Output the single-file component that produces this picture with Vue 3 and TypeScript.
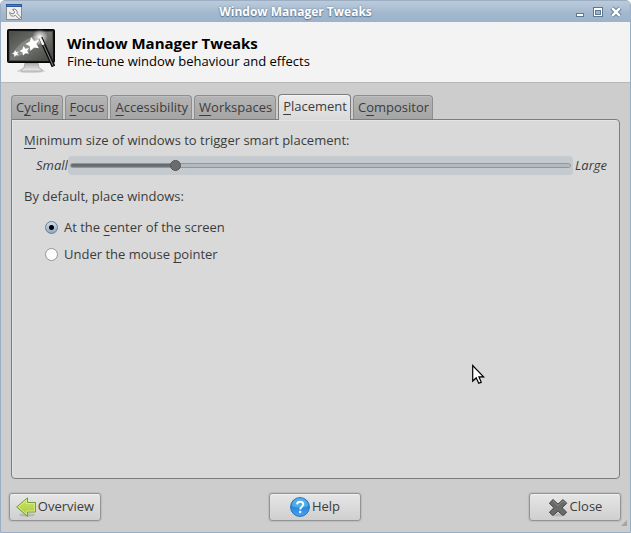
<script setup lang="ts">
import { computed, ref } from 'vue'

interface Label {
  before: string
  key: string
  after: string
}

const tabs: Label[] = [
  { before: 'C', key: 'y', after: 'cling' },
  { before: '', key: 'F', after: 'ocus' },
  { before: '', key: 'A', after: 'ccessibility' },
  { before: '', key: 'W', after: 'orkspaces' },
  { before: '', key: 'P', after: 'lacement' },
  { before: 'C', key: 'o', after: 'mpositor' },
]
const activeTab = ref(4)

const modes: (Label & { value: string })[] = [
  { value: 'center', before: 'At the ', key: 'c', after: 'enter of the screen' },
  { value: 'mouse', before: 'Under the mouse ', key: 'p', after: 'ointer' },
]
const mode = ref('center')

const maxSize = 500
const size = ref(102)
const sliderStyle = computed(() => ({ '--fill': `${(size.value / maxSize) * 100}%` }))
</script>

<template>
  <div class="window">
    <header class="titlebar">
      <svg class="app-icon" viewBox="0 0 16 16" aria-hidden="true">
        <rect x=".5" y=".5" width="15" height="15" fill="#eee" stroke="#8b8d8b" />
        <rect width="16" height="3" fill="#2d5a9e" />
        <rect x="1" y="1" width="14" height="1" fill="#4b7cc0" />
        <path d="M6.500 5.500a3.200 3.200 0 0 1 4.500 4l3.800 3.700-1.600 1.700-3.900-3.700a3.300 3.300 0 0 1-5.600-2.800l2.300 1.600 2-.5.600-2z" fill="#fafafa" stroke="#808080" />
      </svg>
      <span class="title">Window Manager Tweaks</span>
      <div class="controls">
        <button type="button" aria-label="Minimize">
          <svg viewBox="0 0 12 12"><rect x="2.500" y="7.500" width="7" height="3" fill="#fff" stroke="#5f7891" /></svg>
        </button>
        <button type="button" aria-label="Maximize">
          <svg viewBox="0 0 12 12">
            <rect x="1.500" y="1.500" width="9" height="9" fill="#fff" stroke="#5f7891" />
            <rect x="3.500" y="4.500" width="5" height="4" fill="#9db5ce" stroke="#5f7891" />
          </svg>
        </button>
        <button type="button" aria-label="Close window">
          <svg viewBox="0 0 12 12">
            <path d="M2 2l8 8M10 2l-8 8" stroke="#667e96" stroke-width="4.400" />
            <path d="M2.200 2.200l7.600 7.600M9.800 2.200l-7.600 7.600" stroke="#fff" stroke-width="2.400" />
          </svg>
        </button>
      </div>
    </header>

    <section class="banner">
      <svg class="banner-icon" viewBox="0 0 48 48" aria-hidden="true">
        <defs>
          <linearGradient id="screen" x1="0" y1="0" x2="1" y2="1">
            <stop offset="0" stop-color="#484a46" />
            <stop offset=".5" stop-color="#737571" />
            <stop offset="1" stop-color="#41433f" />
          </linearGradient>
          <radialGradient id="glow">
            <stop offset="0" stop-color="#fff" stop-opacity=".95" />
            <stop offset="1" stop-color="#fff" stop-opacity="0" />
          </radialGradient>
          <linearGradient id="stand" x1="0" y1="0" x2="0" y2="1">
            <stop offset="0" stop-color="#aaa" />
            <stop offset="1" stop-color="#eee" />
          </linearGradient>
        </defs>
        <ellipse cx="24" cy="43" rx="14" ry="2" fill="#999" opacity=".35" />
        <path d="M18 35h13l1 5 3 1.500v1.500H14v-1.500l3-1.500z" fill="url(#stand)" stroke="#999" stroke-width=".7" />
        <rect x=".5" y="1.500" width="47" height="33" rx="1" fill="#141414" stroke="#050505" />
        <rect x="2.500" y="3.500" width="43" height="29" fill="url(#screen)" stroke="#4d4f4c" />
        <path d="M7 24c4-8 12-14 25-17l3 6c-5 7-14 13-28 16z" fill="#fff" opacity=".2" />
        <circle cx="33" cy="9" r="8" fill="url(#glow)" />
        <g fill="#fff">
          <path d="M24.200 9l2.800 4 5-1.200-2.700 4.300 2.700 4.200-5-.9-3.600 3.300-.8-4.800-4.200-2 4.200-2.200z" />
          <path d="M16.500 18l2 2.700 3.500-.7-1.800 2.900 1.800 2.800-3.500-.5-2.500 2.300-.6-3.300-2.900-1.300 3-1.600z" />
          <path d="M8 22l1.200 1.900 2.500-.5-1.500 2.100 1.500 2.100-2.500-.5-1.700 1.700-.4-2.400-2-1 2.200-1.100z" />
        </g>
        <path d="M33.500 9.500l13 29" stroke="#111" stroke-width="4" />
        <path d="M34 11l12 26.500" stroke="#888" stroke-width="1" />
        <path d="M32.300 8l4 8.800" stroke="#f4f4f4" stroke-width="2.600" />
      </svg>
      <div>
        <h1>Window Manager Tweaks</h1>
        <p>Fine-tune window behaviour and effects</p>
      </div>
    </section>

    <main>
      <div class="tabs" role="tablist">
        <button
          v-for="(tab, i) in tabs"
          :id="`tab-${i}`"
          :key="i"
          type="button"
          role="tab"
          class="tab"
          :class="{ active: i === activeTab }"
          :aria-selected="i === activeTab"
          @click="activeTab = i"
        >{{ tab.before }}<u>{{ tab.key }}</u>{{ tab.after }}</button>
      </div>

      <div class="panel" role="tabpanel" :aria-labelledby="`tab-${activeTab}`">
        <label class="text" for="size"><u>M</u>inimum size of windows to trigger smart placement:</label>
        <div class="scale">
          <i>Small</i>
          <input id="size" v-model.number="size" type="range" min="0" :max="maxSize" :style="sliderStyle" />
          <i>Large</i>
        </div>
        <div class="modes" role="radiogroup" aria-labelledby="mode-label">
          <p id="mode-label" class="text">By default, place windows:</p>
          <label v-for="m in modes" :key="m.value" class="mode">
            <input v-model="mode" type="radio" name="mode" :value="m.value" />
            <span>{{ m.before }}<u>{{ m.key }}</u>{{ m.after }}</span>
          </label>
        </div>
      </div>
    </main>

    <footer>
      <button type="button" class="action">
        <svg viewBox="0 0 20 20" aria-hidden="true">
          <defs>
            <linearGradient id="arrow" x1="0" y1="0" x2="0" y2="1">
              <stop offset="0" stop-color="#d4e36a" />
              <stop offset="1" stop-color="#a3cb3a" />
            </linearGradient>
          </defs>
          <ellipse cx="11" cy="18" rx="8" ry="1.600" fill="#888" opacity=".35" />
          <path d="M.7 10L11.500.8v4.700h8v9.500h-8v4.500z" fill="url(#arrow)" stroke="#6d9f38" stroke-linejoin="round" />
          <path d="M2.500 10l8-7v3.500h8v7.500h-8v3.300z" fill="none" stroke="#e0ee92" stroke-width=".8" />
        </svg>
        <span>Overview</span>
      </button>
      <button type="button" class="action">
        <svg viewBox="0 0 20 20" aria-hidden="true">
          <defs>
            <linearGradient id="ball" x1="0" y1="0" x2="0" y2="1">
              <stop offset="0" stop-color="#3b93dc" />
              <stop offset=".55" stop-color="#2b89df" />
              <stop offset="1" stop-color="#45a4f4" />
            </linearGradient>
          </defs>
          <circle cx="10" cy="10" r="9.400" fill="url(#ball)" stroke="#2272bd" />
          <path d="M2 9a8 8 0 0 1 16 0c-5 2-11 2-16 0z" fill="#69c8ee" opacity=".55" />
          <path d="M7 7.300c.3-3.500 6.300-3.500 6.300 0 0 2.400-3.100 2.500-3.100 5.200" fill="none" stroke="#fff" stroke-width="1.900" />
          <circle cx="10.200" cy="15" r="1.200" fill="#fff" />
        </svg>
        <span>Help</span>
      </button>
      <button type="button" class="action">
        <svg viewBox="0 0 20 20" aria-hidden="true">
          <ellipse cx="10" cy="18" rx="8" ry="1.500" fill="#888" opacity=".35" />
          <path d="M5 2.500l5 4.500 5-4.500 3.700 3.700-4.500 4.600 4.500 4.500L15 18.500l-5-4.300-5 4.300-3.700-3.200 4.500-4.500-4.500-4.600z" fill="#686a67" stroke="#484a47" stroke-linejoin="round" />
          <path d="M5 4l5 4.500L15 4l2 2.200" fill="none" stroke="#8b8d8a" />
        </svg>
        <span>Close</span>
      </button>
      <svg class="grip" viewBox="0 0 6 6" aria-hidden="true"><path d="M6 0v6H0z" fill="#a5a5a5" /></svg>
    </footer>

    <svg class="pointer" viewBox="0 0 14 22" aria-hidden="true">
      <path d="M1.500 1.500v15.500l3.500-3 2.500 5.500 2.700-1.200-2.400-5.300h4.700z" fill="#888" opacity=".4" transform="translate(1 1)" />
      <path d="M1.700 1.500v15.500l3.500-3.300 2.500 5.500 2.500-1.100-2.300-5.300h4.700z" fill="#fff" stroke="#000" stroke-width="1.200" />
    </svg>
  </div>
</template>

<style>
body {
  background: #fff;
}
</style>

<style scoped>
* {
  box-sizing: border-box;
}

.window {
  position: relative;
  display: flex;
  flex-direction: column;
  min-height: 100vh;
  border: 1px solid #9aafc3;
  border-radius: 5px 5px 0 0;
  overflow: hidden;
  background: #cdcdcd;
  color: #3c3c3c;
  font-family: "Open Sans", "Noto Sans", sans-serif;
  font-size: 13px;
  line-height: 18px;
}

button {
  margin: 0;
  border: 0;
  color: inherit;
  font: inherit;
}

svg {
  display: block;
  flex: none;
}

u {
  text-decoration-skip-ink: none;
  text-underline-offset: 3px;
  text-decoration-thickness: 1px;
}

h1,
p {
  margin: 0;
}

.titlebar {
  display: grid;
  grid-template-columns: 20px 1fr 60px;
  align-items: center;
  height: 21px;
  padding: 0 5px;
  background: linear-gradient(#bccbdb, #a2b8cf 60%, #9cb3cb);
}

.app-icon {
  width: 16px;
  height: 16px;
}

.title {
  color: #fff;
  font-size: 12px;
  font-weight: 700;
  text-align: center;
  text-shadow: 0 0 2px #5f7891, 0 1px 1px #5f7891;
}

.controls {
  display: flex;
  justify-content: flex-end;
  gap: 6px;
  padding-right: 3px;
}

.controls button {
  padding: 0;
  background: none;
}

.controls svg {
  width: 12px;
  height: 12px;
}

.banner {
  display: flex;
  align-items: center;
  gap: 12px;
  height: 61px;
  padding: 0 6px;
  border-bottom: 1px solid #b8b8b8;
  background: #f3f3f3;
  color: #000;
}

.banner-icon {
  width: 48px;
  height: 48px;
}

h1 {
  font-size: 15px;
  font-weight: 700;
  line-height: 18px;
}

main {
  display: flex;
  flex: 1;
  flex-direction: column;
  padding: 11px 10px 14px;
}

.tabs {
  display: flex;
  align-items: flex-end;
  gap: 2px;
}

.tab {
  height: 24px;
  padding: 0 3px 2px 4px;
  border: 1px solid #8e8e8e;
  border-bottom: 0;
  border-radius: 4px 4px 0 0;
  background: linear-gradient(#b4b4b4, #a5a5a5);
  box-shadow: inset 0 1px #bebebe;
  white-space: nowrap;
}

.tab.active {
  z-index: 1;
  height: 26px;
  margin-bottom: -1px;
  padding-bottom: 4px;
  border-color: #7c7c7c;
  background: linear-gradient(#ececec, #d9d9d9);
  box-shadow: inset 0 1px #f5f5f5;
}

.panel {
  flex: 1;
  padding: 11px 12px;
  border: 1px solid #7c7c7c;
  border-radius: 0 4px 4px 4px;
  background: #d9d9d9;
  box-shadow: inset 1px 1px #e4e4e4;
}

.text {
  display: block;
}

.scale {
  display: flex;
  align-items: center;
  height: 20px;
  margin-top: 6px;
  padding-left: 12px;
}

.scale input {
  flex: 1;
  min-width: 0;
  height: 19px;
  margin: 0 2px 0 0;
  padding: 0 2px;
  border-radius: 4px;
  background: #c5cacf;
  appearance: none;
}

.scale input::-webkit-slider-runnable-track {
  height: 5px;
  border: 1px solid #90979d;
  border-radius: 3px;
  background: linear-gradient(#646769, #747678) 0 0 / var(--fill) 100% no-repeat #b4babf;
}

.scale input::-webkit-slider-thumb {
  width: 11px;
  height: 11px;
  margin-top: -4px;
  border: 1px solid #555;
  border-radius: 50%;
  background: #6c6c6c;
  appearance: none;
}

.modes {
  margin-top: 12px;
}

.mode {
  display: flex;
  align-items: center;
  gap: 6px;
  width: fit-content;
  margin: 9px 0 0 21px;
}

.text + .mode {
  margin-top: 13px;
}

.mode input {
  width: 13px;
  height: 13px;
  margin: 0;
  border: 1px solid #959595;
  border-radius: 50%;
  background: #fcfcfc;
  appearance: none;
}

.mode input:checked {
  border-color: #6b7f93;
  background: radial-gradient(circle, #000 0 2px, transparent 3px), linear-gradient(#d0dbe6, #8fa9c4);
}

footer {
  position: relative;
  display: flex;
  justify-content: space-between;
  padding: 0 9px 11px 8px;
}

.action {
  display: flex;
  align-items: center;
  justify-content: center;
  gap: 2px;
  width: 92px;
  height: 28px;
  padding: 0;
  border: 1px solid #949494;
  border-radius: 3px;
  background: linear-gradient(#e6e6e6, #cfcfcf);
  box-shadow: inset 0 1px #f0f0f0, 0 0 1px 1px #bcbcbc;
}

.action svg {
  width: 20px;
  height: 20px;
}

.action span {
  padding-bottom: 2px;
}

.grip {
  position: absolute;
  right: 3px;
  bottom: 6px;
  width: 6px;
  height: 6px;
}

.pointer {
  position: absolute;
  top: 363px;
  left: 470px;
  width: 14px;
  height: 22px;
}
</style>
